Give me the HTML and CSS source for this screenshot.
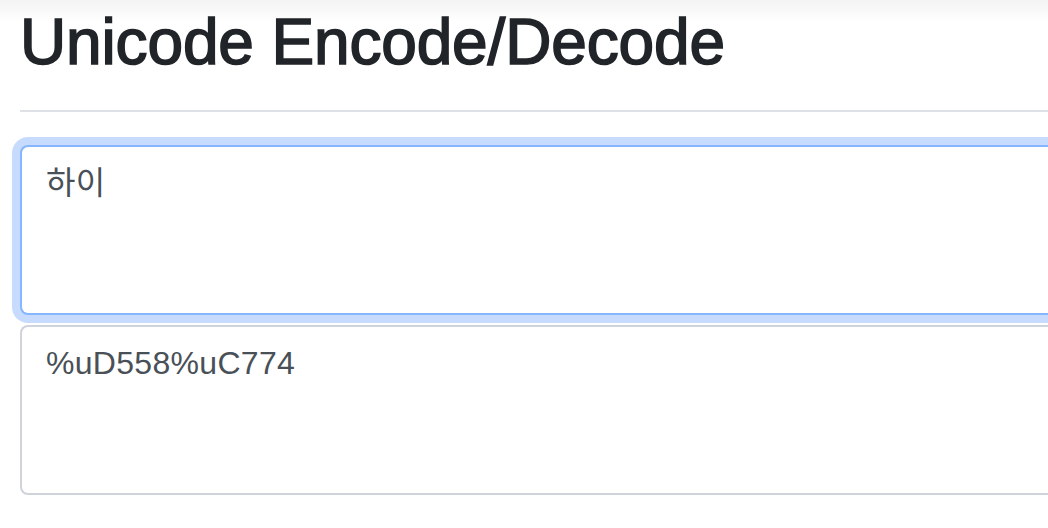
FILE: index.html
```html
<!DOCTYPE html>
<html lang="ko">
<head>
<meta charset="utf-8">
<title>Unicode Encode/Decode</title>
<link rel="stylesheet" href="styles.css">
</head>
<body>
<main class="page">
  <h1 class="title">Unicode Encode/Decode</h1>
  <hr class="rule">
  <textarea class="field field-focus">하이</textarea>
  <textarea class="field">%uD558%uC774</textarea>
</main>
</body>
</html>
```
FILE: styles.css
```css
html, body {
  margin: 0;
  padding: 0;
  overflow: hidden;
}
body {
  background: #fff linear-gradient(#f3f3f3 0, #ffffff 22px) no-repeat;
  color: #212529;
  font-family: "Liberation Sans", Arial, "Noto Sans CJK KR", sans-serif;
  height: 528px;
}
.page {
  padding: 0 0 0 20px;
  box-sizing: border-box;
}
.title {
  margin: 0;
  padding-top: 4px;
  font-size: 64px;
  line-height: 1.2;
  font-weight: 400;
  letter-spacing: -0.15px;
  -webkit-text-stroke: 1.6px #212529;
  color: #212529;
  white-space: nowrap;
}
.rule {
  margin: 29px 0 33px;
  border: 0;
  border-top: 2px solid #dee2e6;
  height: 0;
}
.field {
  display: block;
  box-sizing: border-box;
  width: 100%;
  height: 170px;
  margin: 0 0 10px;
  padding: 12px 0 12px 24px;
  border: 2px solid #ced4da;
  border-right: 0;
  border-radius: 8px 0 0 8px;
  background: #fff;
  color: #495057;
  font-family: "Liberation Sans", Arial, "Noto Sans CJK KR", sans-serif;
  font-size: 32px;
  line-height: 1.5;
  letter-spacing: 0.3px;
  resize: none;
  outline: none;
  overflow: hidden;
}
.field-focus {
  border-color: #86b7fe;
  border-right: 0;
  box-shadow: 0 0 0 8px #c6dbfd;
}
```
